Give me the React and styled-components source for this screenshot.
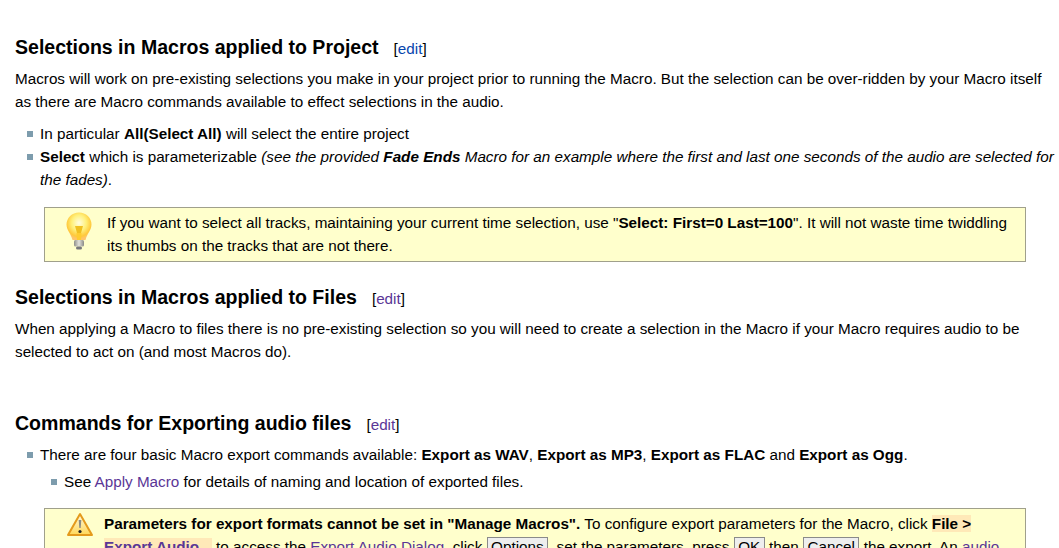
import React from "react";
import styled, { createGlobalStyle } from "styled-components";

const Global = createGlobalStyle`
  html, body { margin: 0; padding: 0; background: #fff; height: 548px; overflow: hidden; }
`;
const Page = styled.div`
  height: 548px; overflow: hidden; box-sizing: border-box;
  padding: 34px 0 0 15px; width: 1059px;
  font-family: "Liberation Sans", Arial, sans-serif; font-size: 15.25px; line-height: 23px; color: #000;
`;
const Heading = styled.h2`
  margin: ${p => p.$top || 0}px 0 0; font-size: 19.55px; line-height: 26px; font-weight: bold; color: #000;
  display: flex; align-items: baseline;
`;
const Edit = styled.span`
  font-size: 15.25px; font-weight: normal; margin-left: 15px;
`;
const Link = styled.a`
  color: ${p => (p.$new ? "#5a3696" : "#0645ad")};
  white-space: ${p => (p.$nowrap ? "nowrap" : "normal")};
`;
const Para = styled.p`
  margin: 5px 0 0; width: 1040px;
`;
const List = styled.ul`
  list-style: none; margin: ${p => p.$top}px 0 0; padding: 0 0 0 ${p => p.$indent || 25}px;
`;
const Item = styled.li`
  position: relative;
  &::before {
    content: ""; position: absolute; left: -13px; top: 9px; width: 6px; height: 6px; background: #7d9cad;
  }
`;
const Note = styled.div`
  box-sizing: border-box; margin: ${p => p.$top}px 0 0 29px; width: 982px;
  background: #ffffcc; border: 1px solid #a0a08c; display: flex;
  padding: ${p => p.$pad}px 8px 4px 21px; gap: ${p => p.$gap}px;
`;
const IconSlot = styled.div`
  flex: none; width: 26px; height: 40px;
`;
const NoteText = styled.div`
  flex: 1;
`;
const Menu = styled.span`
  background: #ffe9b8; font-weight: bold;
`;
const Key = styled.span`
  border: 1px solid #8a8a8a; background: #eeeeee; padding: 0 3.5px;
`;

const Bulb = () => (
  <svg width="26" height="38" viewBox="0 0 26 38" style={{ marginTop: 1 }}>
    <defs>
      <radialGradient id="g" cx="50%" cy="38%" r="58%">
        <stop offset="0%" stopColor="#fffde0" />
        <stop offset="50%" stopColor="#fff07a" />
        <stop offset="85%" stopColor="#ffc93c" />
        <stop offset="100%" stopColor="#ffc46a" />
      </radialGradient>
      <linearGradient id="b" x1="0" y1="0" x2="1" y2="0">
        <stop offset="0%" stopColor="#8f8f8a" />
        <stop offset="50%" stopColor="#e2e2dc" />
        <stop offset="100%" stopColor="#8a8a86" />
      </linearGradient>
    </defs>
    <path d="M13 0.500C6 0.500 0.500 6 0.500 12.500c0 6 4.500 9 6 15.500h13c1.500-6.500 6-9.500 6-15.500C25.500 6 20 0.500 13 0.500z" fill="url(#g)" />
    <path d="M9 14h8l-2 7h-4z" fill="#f0c020" />
    <path d="M10.500 21h5l-.5 7h-4z" fill="#ffcc30" />
    <rect x="8" y="28" width="10" height="6.500" rx="1.500" fill="url(#b)" />
    <rect x="10" y="34.500" width="6" height="3" rx="1.500" fill="#77777a" />
  </svg>
);
const Warn = () => (
  <svg width="28" height="26" viewBox="0 0 28 26">
    <defs>
      <linearGradient id="w" x1="0" y1="0" x2="0" y2="1">
        <stop offset="0%" stopColor="#fffbe0" />
        <stop offset="100%" stopColor="#ffd757" />
      </linearGradient>
    </defs>
    <path d="M14 2 2 23h24z" fill="url(#w)" stroke="#e49a1c" strokeWidth="2" strokeLinejoin="round" />
    <path d="M12.700 8h2.600l-.6 8h-1.400z" fill="#8c8c84" />
    <circle cx="14" cy="19.500" r="1.600" fill="#222" />
  </svg>
);

export default function App() {
  return (
    <Page>
      <Global />
      <Heading>Selections in Macros applied to Project<Edit>[<Link>edit</Link>]</Edit></Heading>
      <Para>Macros will work on pre-existing selections you make in your project prior to running the Macro. But the selection can be over-ridden by your Macro itself as there are Macro commands available to effect selections in the audio.</Para>
      <List $top={9}>
        <Item>In particular <b>All(Select All)</b> will select the entire project</Item>
        <Item><b>Select</b> which is parameterizable <i>(see the provided <b>Fade Ends</b> Macro for an example where the first and last one seconds of the audio are selected for the fades)</i>.</Item>
      </List>
      <Note $top={16} $pad={3} $gap={15}>
        <IconSlot><Bulb /></IconSlot>
        <NoteText>If you want to select all tracks, maintaining your current time selection, use "<b>Select: First=0 Last=100</b>". It will not waste time twiddling its thumbs on the tracks that are not there.</NoteText>
      </Note>
      <Heading $top={22}>Selections in Macros applied to Files<Edit>[<Link $new>edit</Link>]</Edit></Heading>
      <Para>When applying a Macro to files there is no pre-existing selection so you will need to create a selection in the Macro if your Macro requires audio to be selected to act on (and most Macros do).</Para>
      <Heading $top={47}>Commands for Exporting audio files<Edit>[<Link $new>edit</Link>]</Edit></Heading>
      <List $top={5}>
        <Item>There are four basic Macro export commands available: <b>Export as WAV</b>, <b>Export as MP3</b>, <b>Export as FLAC</b> and <b>Export as Ogg</b>.
          <List $top={4} $indent={24}>
            <Item>See <Link $new>Apply Macro</Link> for details of naming and location of exported files.</Item>
          </List>
        </Item>
      </List>
      <Note $top={15} $pad={3} $gap={12}>
        <IconSlot><Warn /></IconSlot>
        <NoteText><b>Parameters for export formats cannot be set in "Manage Macros".</b> To configure export parameters for the Macro, click <Menu>File &gt; <Link $new $nowrap>Export Audio...</Link></Menu> to access the <Link $new>Export Audio Dialog</Link>, click <Key>Options</Key>, set the parameters, press <Key>OK</Key> then <Key>Cancel</Key> the export. An <Link $new>audio</Link></NoteText>
      </Note>
    </Page>
  );
}
